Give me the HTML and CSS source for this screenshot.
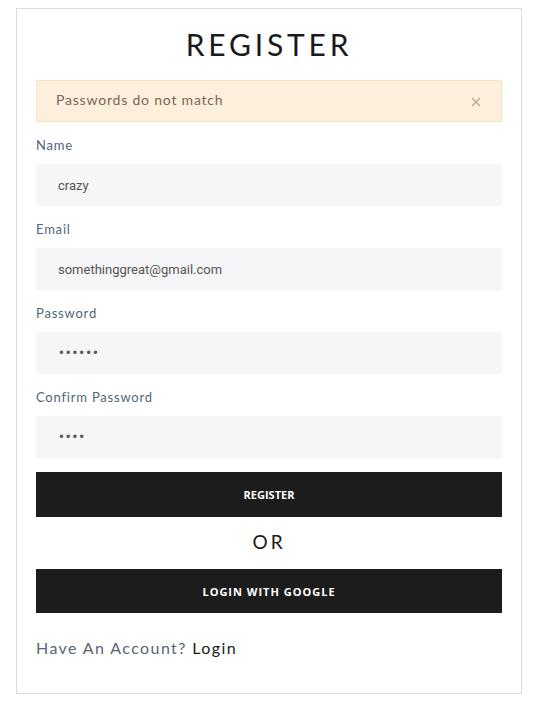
FILE: index.html
```html
<!DOCTYPE html>
<html lang="en">
<head>
<meta charset="utf-8">
<title>Register</title>
<link rel="stylesheet" href="styles.css">
</head>
<body>
<div class="card">
  <h1 class="title">REGISTER</h1>
  <div class="alert">
    <span>Passwords do not match</span>
    <svg class="close" width="10" height="10" viewBox="0 0 10 10"><path d="M1 1 L9 9 M9 1 L1 9" stroke="#b8a68e" stroke-width="1.2" fill="none"/></svg>
  </div>
  <form class="form">
    <div class="group">
      <label class="label">Name</label>
      <input class="input" type="text" value="crazy">
    </div>
    <div class="group">
      <label class="label">Email</label>
      <input class="input" type="email" value="somethinggreat@gmail.com">
    </div>
    <div class="group">
      <label class="label">Password</label>
      <input class="input input-pass" type="password" value="123456">
    </div>
    <div class="group">
      <label class="label">Confirm Password</label>
      <input class="input input-pass" type="password" value="1234">
    </div>
    <button class="btn btn-register" type="button">REGISTER</button>
    <div class="or">OR</div>
    <button class="btn btn-google" type="button">LOGIN WITH GOOGLE</button>
  </form>
  <p class="account">Have An Account? <a class="login" href="#">Login</a></p>
</div>
</body>
</html>
```
FILE: styles.css
```css
* { box-sizing: border-box; }
body {
  margin: 8px 0 0 16px;
  font-family: "Lato", "Open Sans", sans-serif;
  background: #fff;
  color: #222;
}
.card {
  width: 506px;
  border: 1px solid #dcdcdc;
  padding: 18px 19px 34px;
}
.title {
  margin: 0 0 17px;
  height: 36px;
  line-height: 34px;
  text-align: center;
  font-size: 30px;
  font-weight: 400;
  letter-spacing: 3.8px;
  color: #1a1a1a;
}
.alert {
  height: 42px;
  background: #fcefdc;
  border: 1px solid #fae3c4;
  display: flex;
  align-items: center;
  justify-content: space-between;
  padding: 0 20px 3px 19px;
  font-size: 14px;
  letter-spacing: 0.8px;
  color: #76685a;
}
.close { display: block; margin-top: 4px; }
.form { display: flex; flex-direction: column; margin: 0; }
.group { display: flex; flex-direction: column; margin-top: 15px; }
.label {
  height: 18px;
  line-height: 16px;
  font-size: 13px;
  letter-spacing: 0.8px;
  color: #526579;
  margin-bottom: 9px;
}
.input {
  height: 42px;
  border: none;
  background: #f6f6f8;
  padding: 0 22px;
  font-family: "Roboto", sans-serif;
  font-size: 13px;
  color: #555;
  outline: none;
}
.input-pass {
  font-family: "DejaVu Sans", sans-serif;
  font-size: 11.5px;
  letter-spacing: 0;
  color: #5a5a5a;
}
.btn {
  border: none;
  background: #1c1c1c;
  color: #fff;
  font-family: "Open Sans", sans-serif;
  font-weight: 700;
  font-size: 11px;
  cursor: pointer;
}
.btn-register { height: 45px; margin-top: 14px; }
.or {
  margin-top: 13px;
  height: 24px;
  line-height: 24px;
  text-align: center;
  font-size: 19px;
  letter-spacing: 3px;
  color: #1a1a1a;
}
.btn-google { height: 44px; margin-top: 15px; letter-spacing: 1px; }
.account {
  margin: 24px 0 0;
  height: 22px;
  line-height: 22px;
  font-size: 16px;
  letter-spacing: 1.4px;
  color: #5a6470;
}
.login { color: #1a1a1a; text-decoration: none; }
```
